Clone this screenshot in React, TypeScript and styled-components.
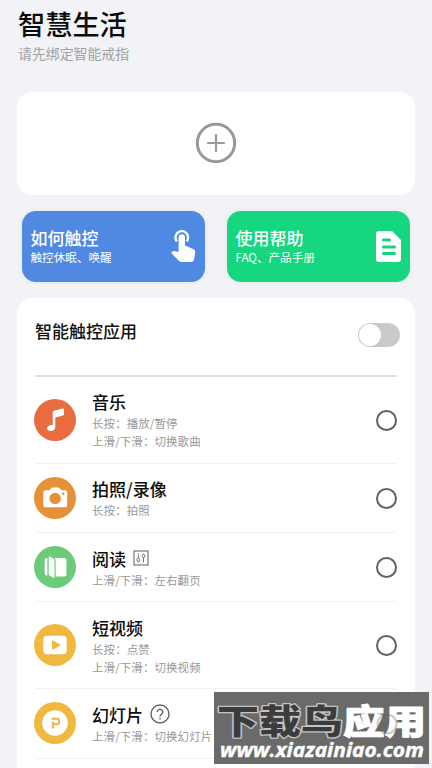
import React from "react";
import styled, { createGlobalStyle } from "styled-components";

interface GestureApp {
  name: string;
  hints: string[];
  color: string;
  icon: React.ReactNode;
  extra?: React.ReactNode;
}

const GlobalStyle = createGlobalStyle`
  * {
    box-sizing: border-box;
  }
  body {
    margin: 0;
    background: #f1f3f6;
    font-family: "Noto Sans CJK SC", sans-serif;
  }
`;

const Page = styled.main`
  position: relative;
  width: 432px;
  height: 768px;
  padding: 4px 17px 0;
  overflow: hidden;
  background: #f1f3f6;
`;

const Title = styled.h1`
  margin: 0;
  padding-left: 1px;
  font-size: 27.2px;
  font-weight: 500;
  line-height: 38px;
  color: #0a0a0a;
`;

const Subtitle = styled.p`
  margin: 0;
  padding-left: 1px;
  font-size: 13.9px;
  line-height: 22px;
  color: #a0a1a3;
`;

const AddCard = styled.section`
  display: flex;
  align-items: center;
  justify-content: center;
  height: 103px;
  margin-top: 27.5px;
  border-radius: 15px;
  background: #fff;
`;

const Tiles = styled.div`
  display: flex;
  gap: 22px;
  padding: 16px 5px 0;
`;

const Tile = styled.div<{ $color: string }>`
  display: flex;
  flex: 1;
  align-items: center;
  justify-content: space-between;
  height: 71.5px;
  padding: 0 8px 0 8.5px;
  border-radius: 14px;
  background: ${(p) => p.$color};
  box-shadow: 0 0 5px rgba(120, 140, 160, 0.12);
  color: #fff;
`;

const TileLabel = styled.div`
  padding-top: 3px;
`;

const TileTitle = styled.div`
  font-size: 17px;
  font-weight: 500;
  line-height: 20px;
`;

const TileText = styled.div`
  font-size: 11.6px;
  line-height: 19px;
`;

const Panel = styled.section`
  height: 500px;
  margin-top: 16px;
  padding: 0 18px;
  border-radius: 16px;
  background: #fff;
`;

const PanelHeader = styled.div`
  display: flex;
  justify-content: space-between;
  height: 78.5px;
  padding-top: 21px;
  border-bottom: 2px solid #e0e0e0;
`;

const PanelTitle = styled.h2`
  margin: 0;
  font-size: 17px;
  font-weight: 500;
  line-height: 24px;
  color: #111;
`;

const Toggle = styled.span`
  width: 42px;
  height: 24px;
  margin: 4px -3px 0 0;
  padding: 1px;
  border-radius: 12px;
  background: #cacaca;

  &::before {
    content: "";
    display: block;
    width: 22px;
    height: 22px;
    border-radius: 50%;
    background: #fff;
  }
`;

const Row = styled.div<{ $tall: boolean }>`
  display: flex;
  align-items: center;
  height: ${(p) => (p.$tall ? 87 : 69.4)}px;
  border-bottom: 1px solid #f0f1f2;
`;

const Badge = styled.span<{ $color: string }>`
  display: flex;
  align-items: center;
  justify-content: center;
  width: 42px;
  height: 42px;
  margin-right: 15px;
  margin-left: -1px;
  border-radius: 50%;
  background: ${(p) => p.$color};
`;

const RowBody = styled.div`
  flex: 1;
  padding-left: 1px;
`;

const Name = styled.div`
  display: flex;
  align-items: center;
  gap: 7px;
  font-size: 17px;
  font-weight: 500;
  line-height: 25px;
  color: #0c0c0c;
`;

const Hint = styled.div`
  font-size: 11.45px;
  letter-spacing: 0.13px;
  line-height: 18px;
  color: #989898;
`;

const Radio = styled.span`
  width: 21px;
  height: 21px;
  margin-top: 1px;
  border: 2px solid #606162;
  border-radius: 50%;
`;

const Watermark = styled.div`
  position: absolute;
  top: 692px;
  left: 214px;
  width: 215px;
  height: 72px;
  background: #6a6a6a;
`;

const PlusIcon = () => (
  <svg width="42" height="42" viewBox="0 0 42 42" fill="none" stroke="#999">
    <circle cx="21" cy="21" r="18.7" strokeWidth="3" />
    <path d="M21 12.2v17.6M12.2 21h17.6" strokeWidth="2.2" />
  </svg>
);

const TouchIcon = () => (
  <svg width="27" height="36" viewBox="0 0 27 36">
    <path
      d="M6.9 13.4a6.3 6.3 0 1 1 9.8 0"
      fill="none"
      stroke="#fff"
      strokeWidth="2.4"
    />
    <path
      d="M8.6 9.4a3.2 3.2 0 0 1 6.4 0v8.2l8.6 3.6q1.8.9 1.6 2.9l-1.1 7.5q-.5 2.4-2.7 2.4H11.3q-1.3 0-2.2-.9L1.2 25l1-1.2q1-1 2.3-.7l4.1.9z"
      fill="#fff"
    />
  </svg>
);

const DocIcon = () => (
  <svg width="27" height="33" viewBox="0 0 27 33">
    <path
      d="M4 1h13l9 9v19a3 3 0 0 1-3 3H4a3 3 0 0 1-3-3V4a3 3 0 0 1 3-3z"
      fill="#fff"
    />
    <path
      d="M8.5 10h6M8.5 17h11M8.5 23.5h11"
      stroke="#16d67f"
      strokeWidth="3.2"
      strokeLinecap="round"
    />
  </svg>
);

const MusicIcon = () => (
  <svg width="42" height="42" viewBox="0 0 42 42" fill="#fff">
    <path d="M18.7 13.2q0-1.2 1.2-1.4l8.8-2.3q1.3-.2 1.3 1v4.8q0 1-1 1.2l-7.7 2.1v9.1c0 2.3-1.7 4.2-4.2 4.4-2.3.2-4-1-4-2.8 0-2.3 2.7-3.8 5.6-3.2z" />
  </svg>
);

const CameraIcon = () => (
  <svg width="42" height="42" viewBox="0 0 42 42">
    <path
      d="M11.3 13.2h4.2l1.7-2.2q.5-.6 1.2-.6h6q.7 0 1.2.6l1.7 2.2h3.9q2 0 2 2v13q0 2-2 2H11.3q-2 0-2-2v-13q0-2 2-2z"
      fill="#fff"
    />
    <circle cx="21.2" cy="21.5" r="5.7" fill="#e69138" />
    <circle cx="29.3" cy="16.8" r="1.2" fill="#e69138" />
  </svg>
);

const BookIcon = () => (
  <svg width="42" height="42" viewBox="0 0 42 42" fill="#fff">
    <path d="M13.4 12v17.5h-1q-1.7 0-1.7-1.7V14q0-1.7 1.7-2z" />
    <path d="M14.7 11.2q0-1.2 1.1-.8l3.2 1.8q1.5.9 1.5 2.5v16.5q0 1.2-1.1.6l-3.4-1.9q-1.3-.7-1.3-2.2z" />
    <path d="M20.4 12h10q2 0 2 2v14.5q0 2-2 2h-8.7V15q0-2-1.3-3z" />
  </svg>
);

const VideoIcon = () => (
  <svg width="42" height="42" viewBox="0 0 42 42">
    <rect x="9.3" y="11.8" width="23.4" height="18.4" rx="3.6" fill="#fff" />
    <path
      d="M18 17.1q0-1.1 1-.6l6.8 3.7q1.1.8 0 1.5L19 25.4q-1 .5-1-.6z"
      fill="#efb940"
    />
  </svg>
);

const SlideIcon = () => (
  <svg width="42" height="42" viewBox="0 0 42 42">
    <circle cx="21" cy="21" r="12.8" fill="#fff" />
    <path
      d="M17.5 16.7h6.3q1.3 0 1.3 1.3v2.6q0 1.3-1.3 1.3h-4.7M18.9 19.4v7.2"
      fill="none"
      stroke="#f0b83f"
      strokeWidth="2"
    />
  </svg>
);

const SlidersIcon = () => (
  <svg width="16" height="16" viewBox="0 0 16 16" fill="none" stroke="#777">
    <rect x="1" y="1" width="14" height="14" strokeWidth="1.2" />
    <path d="M5.3 3.5v5M5.3 11.4v1.2M10.5 3.5v1.1M10.5 7.5v5" />
    <circle cx="5.3" cy="9.9" r="1.5" />
    <circle cx="10.5" cy="6" r="1.5" />
  </svg>
);

const HelpIcon = () => (
  <svg
    width="20"
    height="20"
    viewBox="0 0 20 20"
    fill="none"
    stroke="#666"
    strokeWidth="1.4"
  >
    <circle cx="10" cy="10" r="9" />
    <path d="M7.3 8.1a2.7 2.7 0 1 1 4.3 2.1c-1 .7-1.6 1.1-1.6 2.3M10 13.8v1.6" />
  </svg>
);

const apps: GestureApp[] = [
  {
    name: "音乐",
    hints: ["长按：播放/暂停", "上滑/下滑：切换歌曲"],
    color: "#e96b40",
    icon: <MusicIcon />,
  },
  {
    name: "拍照/录像",
    hints: ["长按：拍照"],
    color: "#e69138",
    icon: <CameraIcon />,
  },
  {
    name: "阅读",
    hints: ["上滑/下滑：左右翻页"],
    color: "#6bcb79",
    icon: <BookIcon />,
    extra: <SlidersIcon />,
  },
  {
    name: "短视频",
    hints: ["长按：点赞", "上滑/下滑：切换视频"],
    color: "#efb940",
    icon: <VideoIcon />,
  },
  {
    name: "幻灯片",
    hints: ["上滑/下滑：切换幻灯片"],
    color: "#f0b83f",
    icon: <SlideIcon />,
    extra: <HelpIcon />,
  },
];

const AppRow: React.FC<{ app: GestureApp }> = ({ app }) => (
  <Row $tall={app.hints.length > 1}>
    <Badge $color={app.color}>{app.icon}</Badge>
    <RowBody>
      <Name>
        {app.name}
        {app.extra}
      </Name>
      {app.hints.map((hint) => (
        <Hint key={hint}>{hint}</Hint>
      ))}
    </RowBody>
    <Radio />
  </Row>
);

const SiteMark = () => (
  <Watermark>
    <svg width="215" height="72" viewBox="0 0 215 72">
      <g
        fontFamily="'Noto Sans CJK SC', sans-serif"
        fontWeight="900"
        fontSize="34"
        paintOrder="stroke"
        strokeLinejoin="round"
      >
        <text
          x="3"
          y="42"
          textLength="126"
          lengthAdjust="spacingAndGlyphs"
          fill="#3c3c3c"
          stroke="#c4c4c4"
          strokeWidth="2.6"
        >
          下载鸟
        </text>
        <text
          x="129"
          y="42"
          textLength="83"
          lengthAdjust="spacingAndGlyphs"
          fill="#fff"
          stroke="#fff"
          strokeWidth="1"
        >
          应用
        </text>
      </g>
      <circle
        cx="173"
        cy="32"
        r="9.5"
        fill="none"
        stroke="#606060"
        strokeWidth="2"
        opacity="0.35"
      />
      <text
        x="6"
        y="65"
        textLength="204"
        lengthAdjust="spacingAndGlyphs"
        fontFamily="'Open Sans', sans-serif"
        fontStyle="italic"
        fontWeight="700"
        fontSize="19"
        fill="#fff"
        stroke="#fff"
        strokeWidth="0.4"
      >
        www.xiazainiao.com
      </text>
    </svg>
  </Watermark>
);

const App: React.FC = () => {
  return (
    <Page>
      <GlobalStyle />
      <Title>智慧生活</Title>
      <Subtitle>请先绑定智能戒指</Subtitle>
      <AddCard>
        <PlusIcon />
      </AddCard>
      <Tiles>
        <Tile $color="#4f89e1">
          <TileLabel>
            <TileTitle>如何触控</TileTitle>
            <TileText>触控休眠、唤醒</TileText>
          </TileLabel>
          <TouchIcon />
        </Tile>
        <Tile $color="#16d67f">
          <TileLabel>
            <TileTitle>使用帮助</TileTitle>
            <TileText>FAQ、产品手册</TileText>
          </TileLabel>
          <DocIcon />
        </Tile>
      </Tiles>
      <Panel>
        <PanelHeader>
          <PanelTitle>智能触控应用</PanelTitle>
          <Toggle />
        </PanelHeader>
        {apps.map((app) => (
          <AppRow key={app.name} app={app} />
        ))}
      </Panel>
      <SiteMark />
    </Page>
  );
};

export default App;
